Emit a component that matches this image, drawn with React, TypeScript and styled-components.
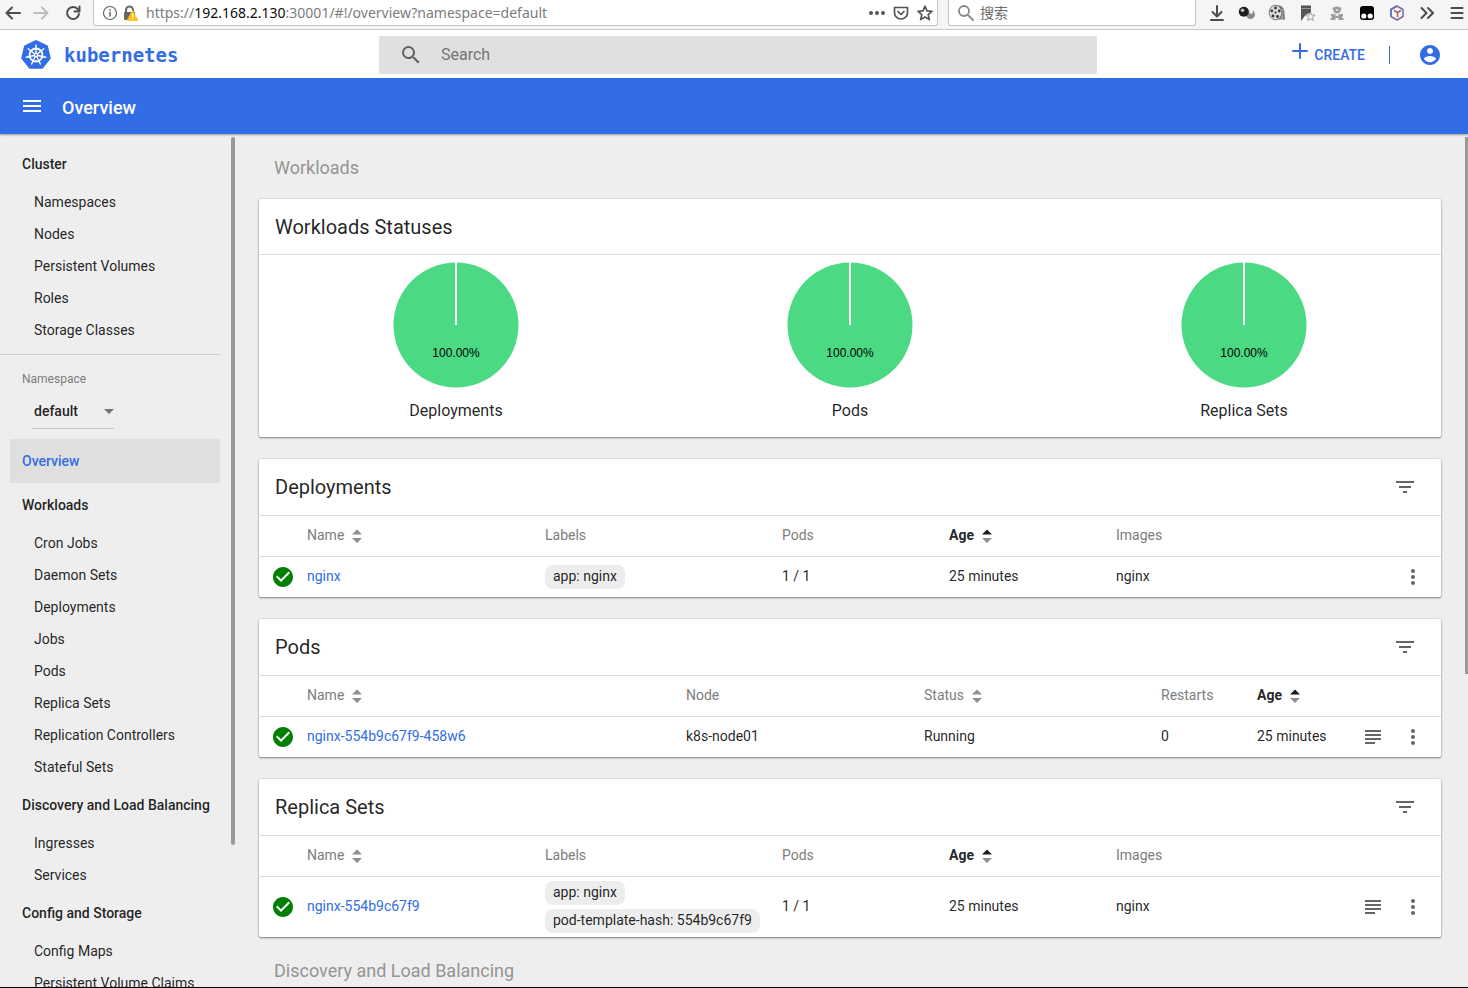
import React from "react";
import styled, { createGlobalStyle, css } from "styled-components";

const BLUE = "#326de6";
const TEXT = "rgba(0, 0, 0, 0.87)";
const MUTED = "#7d7d7d";

const GlobalStyle = createGlobalStyle`
  *, *::before, *::after { box-sizing: border-box; }
  html, body { margin: 0; height: 100%; }
  #root { height: 100%; }
  body { font-family: Roboto, "Liberation Sans", sans-serif; font-size: 14px; line-height: 20px; color: ${TEXT}; background: #eee; overflow: hidden; }
  button, input, select { font: inherit; color: inherit; }
  button { border: 0; padding: 0; background: none; cursor: pointer; }
  svg { display: block; flex: none; }
`;

const Page = styled.div`
  display: flex;
  flex-direction: column;
  height: 100vh;
  border-bottom: 1px solid #000;
`;

/* ---------- browser toolbar ---------- */

const Chrome = styled.div`
  flex: none;
  display: flex;
  align-items: flex-start;
  height: 30px;
  padding-left: 1px;
  background: #f5f5f5;
  border-bottom: 1px solid #c8c8c8;
  font-family: "Noto Sans", "Noto Sans CJK SC", sans-serif;
`;

const ChromeButton = styled.button<{ $w?: number }>`
  flex: none;
  display: flex;
  align-items: center;
  justify-content: center;
  width: ${(p) => p.$w ?? 30}px;
  height: 26px;
`;

const MenuButton = styled(ChromeButton)`
  width: 26px;
  padding-left: 4px;
`;

const Field = styled.div`
  display: flex;
  align-items: center;
  height: 26px;
  background: #fff;
  border: 1px solid #c4c4c4;
  border-top: 0;
  border-radius: 0 0 3px 3px;
`;

const UrlField = styled(Field)`
  flex: 1;
  margin-left: 5px;
  padding-left: 8px;
`;

const Url = styled.div`
  flex: 1;
  margin-left: 4px;
  color: #7c7c7c;
  white-space: nowrap;
  overflow: hidden;
  b { font-weight: 400; color: #0c0c0d; }
`;

const WebSearch = styled(Field)`
  width: 248px;
  margin: 0 6px 0 10px;
  padding-left: 9px;
  input {
    flex: 1;
    min-width: 0;
    margin-left: 6px;
    padding: 0;
    border: 0;
    outline: 0;
    background: none;
  }
  input::placeholder { color: #6c6c6c; opacity: 1; }
`;

/* ---------- application header ---------- */

const Header = styled.header`
  flex: none;
  display: grid;
  grid-template-columns: 379px 1fr 371px;
  align-items: center;
  height: 48px;
  padding-top: 1px;
  background: #fff;
`;

const Brand = styled.a`
  display: flex;
  align-items: center;
  gap: 12px;
  padding-left: 20px;
  color: ${BLUE};
  text-decoration: none;
  font: 700 19px/24px "DejaVu Sans Mono", monospace;
`;

const SearchBox = styled.label`
  display: flex;
  align-items: center;
  gap: 18px;
  height: 38px;
  padding-left: 20px;
  background: #e0e0e0;
  border-radius: 2px;
  input {
    flex: 1;
    min-width: 0;
    padding: 0;
    border: 0;
    outline: 0;
    background: none;
    font-size: 16px;
  }
  input::placeholder { color: #757575; opacity: 1; }
`;

const HeaderActions = styled.div`
  display: flex;
  align-items: center;
  justify-content: flex-end;
  padding-right: 26px;
  color: ${BLUE};
`;

const CreateButton = styled.button`
  display: flex;
  align-items: center;
  gap: 6px;
  padding-right: 24px;
  font-weight: 500;
  svg { margin-bottom: 8px; }
`;

const AccountButton = styled.button`
  padding-left: 28px;
  border-left: 1px solid ${BLUE};
  height: 18px;
  display: flex;
  align-items: center;
`;

const TitleBar = styled.div`
  flex: none;
  display: flex;
  align-items: center;
  gap: 18px;
  height: 56px;
  padding: 0 20px;
  background: ${BLUE};
  color: #fff;
  box-shadow: 0 1px 2px rgba(0, 0, 0, 0.35);
  z-index: 1;
  h1 { margin: 0; padding-top: 3px; font-size: 18px; line-height: 24px; font-weight: 500; }
`;

/* ---------- body and navigation ---------- */

const Body = styled.div`
  flex: 1;
  min-height: 0;
  display: flex;
  overflow: hidden;
`;

const Sidebar = styled.nav`
  flex: none;
  width: 220px;
  padding-top: 8px;
  overflow: hidden;
  white-space: nowrap;
`;

const Thumb = styled.div<{ $length: string; $w: number }>`
  flex: none;
  width: ${(p) => p.$w}px;
  height: ${(p) => p.$length};
  margin-top: 3px;
  background: #999;
`;

const SideThumb = styled(Thumb)`
  margin-left: 11px;
  border-radius: 2px;
`;

const navLink = css`
  display: flex;
  align-items: center;
  color: inherit;
  text-decoration: none;
`;

const GroupLink = styled.a<{ $active?: boolean }>`
  ${navLink}
  height: 44px;
  margin-left: 10px;
  padding-left: 12px;
  font-weight: 500;
  ${(p) => p.$active && css`background: #dfdfdf; color: ${BLUE};`}
`;

const ItemLink = styled.a`
  ${navLink}
  height: 32px;
  padding-left: 34px;
`;

const NamespaceBox = styled.div`
  margin-top: 8px;
  padding: 14px 0 10px 22px;
  border-top: 1px solid #cdcdcd;
  label { display: block; font-size: 12px; color: ${MUTED}; }
`;

const SelectWrap = styled.div`
  display: flex;
  align-items: center;
  width: 82px;
  height: 35px;
  margin: 5px 0 0 10px;
  border-bottom: 1px solid #c8c8c8;
  select {
    appearance: none;
    flex: 1;
    min-width: 0;
    padding: 0 0 0 2px;
    border: 0;
    background: none;
    font-weight: 500;
  }
`;

/* ---------- content ---------- */

const Main = styled.main`
  flex: 1;
  min-width: 0;
  padding: 0 24px;
  overflow: hidden;
`;

const SectionTitle = styled.h2`
  margin: 0;
  padding: 22px 15px 19px;
  font-size: 18px;
  line-height: 24px;
  font-weight: 400;
  color: #949494;
`;

const Card = styled.section`
  background: #fff;
  border-radius: 2px;
  box-shadow: 0 1px 2px rgba(0, 0, 0, 0.45), 0 0 2px rgba(0, 0, 0, 0.2);
  & + & { margin-top: 22px; }
`;

const CardHeader = styled.div<{ $h?: number }>`
  display: flex;
  align-items: center;
  justify-content: space-between;
  height: ${(p) => p.$h ?? 56}px;
  padding: 0 24px 0 16px;
  color: #666;
  h3 { margin: 0; font-size: 20px; line-height: 24px; font-weight: 400; color: ${TEXT}; }
`;

const Pies = styled.div`
  display: grid;
  grid-template-columns: repeat(3, 1fr);
  border-top: 1px solid #dedede;
  padding: 6px 0 16px;
`;

const PieFigure = styled.figure`
  display: flex;
  flex-direction: column;
  align-items: center;
  gap: 12px;
  margin: 0;
  font-size: 16px;
  text { font: 12px "Liberation Sans", sans-serif; text-anchor: middle; }
`;

const Table = styled.table`
  display: block;
`;

const RowGroup = styled.tbody`
  display: block;
`;

const Row = styled.tr<{ $cols: string }>`
  display: grid;
  grid-template-columns: 48px ${(p) => p.$cols} 40px 40px;
  align-items: center;
  min-height: 41px;
  padding-right: 8px;
  border-top: 1px solid #dadada;
`;

const HeadCell = styled.th<{ $active?: boolean }>`
  padding: 0 0 2px;
  text-align: left;
  font-weight: ${(p) => (p.$active ? 700 : 400)};
  color: ${(p) => (p.$active ? TEXT : MUTED)};
  button { display: flex; align-items: center; gap: 7px; font-weight: inherit; }
  svg { margin-top: 2px; }
`;

const Cell = styled.td<{ $icon?: boolean }>`
  padding: 0 0 2px;
  white-space: nowrap;
  ${(p) => p.$icon && css`display: flex; justify-content: center; padding: 0; color: #666;`}
`;

const NameLink = styled.a`
  color: ${BLUE};
  text-decoration: none;
`;

const Chips = styled.div`
  display: flex;
  flex-direction: column;
  align-items: flex-start;
  gap: 4px;
  padding: 4px 0 2px;
`;

const Chip = styled.span`
  padding: 1px 8px 3px;
  border-radius: 8px;
  background: #ededed;
`;

/* ---------- icons ---------- */

const Svg = ({ size = 24, d, color = "currentColor" }: { size?: number; d: string; color?: string }) => (
  <svg width={size} height={size} viewBox="0 0 24 24" fill={color} aria-hidden="true"><path d={d} /></svg>
);

const Line = ({ d, w = 2, color = "#4c4c4c", size = 16 }: { d: string; w?: number; color?: string; size?: number }) => (
  <svg width={size} height={size} viewBox="0 0 16 16" fill="none" stroke={color} strokeWidth={w} strokeLinecap="round" strokeLinejoin="round" aria-hidden="true"><path d={d} /></svg>
);

const MENU = "M3 18h18v-2H3v2zm0-5h18v-2H3v2zm0-7v2h18V6H3z";
const FILTER = "M10 18h4v-2h-4v2zM3 6v2h18V6H3zm3 7h12v-2H6v2z";
const MORE = "M12 8c1.100 0 2-.9 2-2s-.9-2-2-2-2 .9-2 2 .9 2 2 2zm0 2c-1.100 0-2 .9-2 2s.9 2 2 2 2-.9 2-2-.9-2-2-2zm0 6c-1.100 0-2 .9-2 2s.9 2 2 2 2-.9 2-2-.9-2-2-2z";
const SUBJECT = "M4 5h16v2H4zM4 9h16v2H4zM4 13h16v2H4zM4 17h10v2H4z";
const SEARCH = "M15.500 14h-.79l-.28-.27A6.471 6.471 0 0 0 16 9.500 6.500 6.500 0 1 0 9.500 16c1.610 0 3.090-.59 4.230-1.570l.27.28v.79l5 4.990L20.490 19l-4.990-5zm-6 0C7.010 14 5 11.990 5 9.500S7.010 5 9.500 5 14 7.010 14 9.500 11.990 14 9.500 14z";
const ACCOUNT = "M12 2C6.480 2 2 6.480 2 12s4.480 10 10 10 10-4.480 10-10S17.520 2 12 2zm0 3c1.660 0 3 1.340 3 3s-1.340 3-3 3-3-1.340-3-3 1.340-3 3-3zm0 14.200c-2.500 0-4.710-1.280-6-3.220.03-1.990 4-3.080 6-3.080 1.990 0 5.970 1.090 6 3.080-1.290 1.940-3.500 3.220-6 3.220z";
const CHECK = "M12 2C6.480 2 2 6.480 2 12s4.480 10 10 10 10-4.480 10-10S17.520 2 12 2zm-2 15l-5-5 1.410-1.410L10 14.170l7.590-7.590L19 8l-9 9z";

const SortIcon = ({ active }: { active?: boolean }) => (
  <svg width="12" height="14" viewBox="0 0 12 14" aria-hidden="true">
    <path d="M1 5.500 6 .5l5 5z" fill={active ? "#1c1c1c" : "#8f8f8f"} />
    <path d="M1 9l5 5 5-5z" fill="#8f8f8f" />
  </svg>
);

const Wheel = () => (
  <svg width="32" height="32" viewBox="0 0 32 32" aria-hidden="true">
    <path d="M16 2.500 26.500 7.500 29.200 19 21.800 28.300H10.200L2.800 19 5.500 7.500z" fill={BLUE} stroke={BLUE} strokeWidth="3" strokeLinejoin="round" />
    <g fill="none" stroke="#fff" strokeLinecap="round">
      <circle cx="16" cy="16" r="6.500" strokeWidth="1.800" />
      {Array.from({ length: 7 }, (_, i) => (
        <path key={i} d="M16 14V6" strokeWidth="1.400" transform={`rotate(${(i * 360) / 7} 16 16)`} />
      ))}
    </g>
    <circle cx="16" cy="16" r="2.200" fill="#fff" />
    <circle cx="16" cy="16" r="0.900" fill={BLUE} />
  </svg>
);

const InfoIcon = () => (
  <svg width="16" height="16" viewBox="0 0 16 16" aria-hidden="true">
    <circle cx="8" cy="8" r="6.500" fill="none" stroke="#666" strokeWidth="1.200" />
    <path d="M7.200 7h1.600v4.500H7.200zM7.200 4.300h1.600v1.500H7.200z" fill="#666" />
  </svg>
);

const LockIcon = () => (
  <svg width="16" height="16" viewBox="0 0 16 16" aria-hidden="true">
    <path d="M4 8V5a3.500 3.500 0 0 1 7 0v3" fill="none" stroke="#666" strokeWidth="2" />
    <rect x="2" y="7" width="11" height="8" rx="1" fill="#666" />
    <path d="M10.500 5.500 16 15.500H5z" fill="#ffc21a" stroke="#ffc21a" strokeWidth=".8" strokeLinejoin="round" />
    <path d="M10 8.500h1.200V12H10zM10 13h1.200v1.200H10z" fill="#fff" />
  </svg>
);

const Balls = () => (
  <svg width="18" height="16" viewBox="0 0 18 16" aria-hidden="true">
    <circle cx="12.500" cy="9.500" r="4.500" fill="#8a8a8a" /><circle cx="13" cy="6.800" r="2" fill="#f2f2f2" />
    <circle cx="5.800" cy="6.800" r="5" fill="#1d1d1d" /><circle cx="4.500" cy="5.200" r="1.800" fill="#bbb" />
  </svg>
);

const Reel = () => (
  <svg width="18" height="18" viewBox="0 0 18 18" aria-hidden="true">
    <path d="M8 1.500h4c3 1 4.500 4 4.500 8l.5 6H9z" fill="#777" />
    <path d="M14 5v10" stroke="#ccc" />
    <ellipse cx="7.500" cy="8.500" rx="6.300" ry="7.300" fill="#ddd" stroke="#777" />
    <g fill="#333"><circle cx="7.500" cy="8.500" r="1.100" /><circle cx="7.500" cy="4" r="1.400" /><circle cx="3.800" cy="6.800" r="1.400" /><circle cx="5" cy="12" r="1.400" /><circle cx="9.500" cy="12.500" r="1.400" /><circle cx="11.200" cy="7" r="1.400" /></g>
  </svg>
);

const Flag = () => (
  <svg width="18" height="18" viewBox="0 0 18 18" aria-hidden="true">
    <path d="M3 1.500h10v7l-5 2-5 6.500z" fill="#555" />
    <path d="M3 4.500h10" stroke="#999" />
    <path d="m12.500 8 1.200 2.900 3.200.3-2.400 2.100.7 3.200-2.700-1.700-2.800 1.700.7-3.200L8 11.200l3.200-.3z" fill="#eee" stroke="#8a8a8a" strokeWidth=".8" />
  </svg>
);

const Robot = () => (
  <svg width="16" height="16" viewBox="0 0 16 16" aria-hidden="true">
    <g fill="#9c9c9c">
      <circle cx="8" cy="5" r="3.600" /><circle cx="4.800" cy="3.500" r="1.300" /><circle cx="11.200" cy="3.500" r="1.300" />
      <path d="M2 9h4.500v2.500L8 10.500l1.500 1V9H14v2.500h-1V13h1.500v2h-5v-2h-3v2h-5v-2H3v-1.500H2z" />
    </g>
    <circle cx="8" cy="5" r="1.300" fill="#d8d8d8" />
  </svg>
);

const Monkey = () => (
  <svg width="16" height="16" viewBox="0 0 16 16" aria-hidden="true">
    <rect x="1" y="1" width="14" height="14" rx="3" fill="#000" />
    <circle cx="4.800" cy="11" r="2.600" fill="#fff" /><circle cx="11.200" cy="11" r="2.600" fill="#fff" />
  </svg>
);

const Cube = () => (
  <svg width="16" height="16" viewBox="0 0 16 16" fill="none" strokeWidth="1.500" strokeLinejoin="round" aria-hidden="true">
    <path d="m8 1 6 3.500v7L8 15l-6-3.500v-7z" stroke="#7d68a8" />
    <path d="M5 5.500 8.500 7.500 12 5.500M8.500 7.500v4.500" stroke="#a8606e" />
    <path d="M2 11.500v-7L8 1" stroke="#5b6fb5" />
  </svg>
);

/* ---------- data ---------- */

const cluster = ["Namespaces", "Nodes", "Persistent Volumes", "Roles", "Storage Classes"];
const groups: [string, string[]][] = [
  ["Workloads", ["Cron Jobs", "Daemon Sets", "Deployments", "Jobs", "Pods", "Replica Sets", "Replication Controllers", "Stateful Sets"]],
  ["Discovery and Load Balancing", ["Ingresses", "Services"]],
  ["Config and Storage", ["Config Maps", "Persistent Volume Claims"]],
];

type Column = { title: string; sort?: "idle" | "active" };
type Resource = { title: string; cols: string; columns: Column[]; cells: (string | string[])[]; logs?: boolean };

const workloadCols = "238fr 237fr 167fr 167fr 237fr";
const podCols = "379fr 238fr 237fr 96fr 96fr";

const workloadColumns: Column[] = [
  { title: "Name", sort: "idle" }, { title: "Labels" }, { title: "Pods" }, { title: "Age", sort: "active" }, { title: "Images" },
];

const resources: Resource[] = [
  {
    title: "Deployments", cols: workloadCols, columns: workloadColumns,
    cells: ["nginx", ["app: nginx"], "1 / 1", "25 minutes", "nginx"],
  },
  {
    title: "Pods", cols: podCols, logs: true,
    columns: [{ title: "Name", sort: "idle" }, { title: "Node" }, { title: "Status", sort: "idle" }, { title: "Restarts" }, { title: "Age", sort: "active" }],
    cells: ["nginx-554b9c67f9-458w6", "k8s-node01", "Running", "0", "25 minutes"],
  },
  {
    title: "Replica Sets", cols: workloadCols, columns: workloadColumns, logs: true,
    cells: ["nginx-554b9c67f9", ["app: nginx", "pod-template-hash: 554b9c67f9"], "1 / 1", "25 minutes", "nginx"],
  },
];

/* ---------- views ---------- */

const Pie = ({ name }: { name: string }) => (
  <PieFigure>
    <svg width="128" height="128" viewBox="0 0 128 128">
      <circle cx="64" cy="64" r="62.500" fill="#4cd984" />
      <path d="M64 0v64" stroke="#fff" strokeWidth="2" />
      <text x="64" y="96">100.00%</text>
    </svg>
    <figcaption>{name}</figcaption>
  </PieFigure>
);

const ResourceCard = ({ title, cols, columns, cells, logs }: Resource) => (
  <Card>
    <CardHeader>
      <h3>{title}</h3>
      <button aria-label={`Filter ${title}`}><Svg d={FILTER} /></button>
    </CardHeader>
    <Table>
      <RowGroup as="thead">
        <Row $cols={cols}>
          <HeadCell />
          {columns.map((c) => (
            <HeadCell key={c.title} $active={c.sort === "active"}>
              {c.sort ? <button>{c.title}<SortIcon active={c.sort === "active"} /></button> : c.title}
            </HeadCell>
          ))}
        </Row>
      </RowGroup>
      <RowGroup>
        <Row $cols={cols}>
          <Cell $icon><Svg d={CHECK} color="#008000" /></Cell>
          {cells.map((cell, i) => (
            <Cell key={i}>
              {Array.isArray(cell)
                ? <Chips>{cell.map((l) => <Chip key={l}>{l}</Chip>)}</Chips>
                : i === 0 ? <NameLink href="#">{cell}</NameLink> : cell}
            </Cell>
          ))}
          <Cell $icon>{logs && <button aria-label="Logs"><Svg d={SUBJECT} /></button>}</Cell>
          <Cell $icon><button aria-label="Actions"><Svg d={MORE} /></button></Cell>
        </Row>
      </RowGroup>
    </Table>
  </Card>
);

export default function App() {
  return (
    <Page>
      <GlobalStyle />
      <Chrome>
        <ChromeButton aria-label="Back" $w={24}><Line d="M15 8H1.500M7 2.500 1.500 8 7 13.500" /></ChromeButton>
        <ChromeButton aria-label="Forward" $w={32}><Line color="#bdbdbd" d="M1 8h13.500M9 2.500 14.500 8 9 13.500" /></ChromeButton>
        <ChromeButton aria-label="Reload" $w={31}><Line d="M13 4.500A6 6 0 1 0 14 9M14.500 1.500v5h-5" /></ChromeButton>
        <UrlField>
          <InfoIcon />
          <ChromeButton as="span" $w={24}><LockIcon /></ChromeButton>
          <Url role="textbox" aria-label="Address">https://<b>192.168.2.130</b>:30001/#!/overview?namespace=default</Url>
          <ChromeButton aria-label="Page actions" $w={24}>
            <svg width="16" height="16" viewBox="0 0 16 16" fill="#555"><circle cx="2" cy="8" r="2" /><circle cx="8" cy="8" r="2" /><circle cx="14" cy="8" r="2" /></svg>
          </ChromeButton>
          <ChromeButton aria-label="Save" $w={24}><Line w={1.7} color="#555" d="M1.500 2.500h13V8a6.500 6 0 0 1-13 0zM5 6.500l3 3 3-3" /></ChromeButton>
          <ChromeButton aria-label="Bookmark" $w={24}><Line w={1.7} color="#555" d="m8 1.200 2 4.600 5 .5-3.800 3.300 1.200 5L8 12l-4.400 2.600 1.200-5L1 6.300l5-.5z" /></ChromeButton>
        </UrlField>
        <WebSearch>
          <Line w={1.8} color="#888" d="M6 11A5 5 0 1 0 6 1a5 5 0 0 0 0 10zM9.800 9.800 15 15" />
          <input aria-label="搜索" placeholder="搜索" />
        </WebSearch>
        <ChromeButton aria-label="Downloads"><Line d="M8 1v10M3.500 7 8 11.500 12.500 7M2 15h12" /></ChromeButton>
        <ChromeButton aria-label="Proxy"><Balls /></ChromeButton>
        <ChromeButton aria-label="Video"><Reel /></ChromeButton>
        <ChromeButton aria-label="Bookmarks"><Flag /></ChromeButton>
        <ChromeButton aria-label="Robot"><Robot /></ChromeButton>
        <ChromeButton aria-label="Scripts"><Monkey /></ChromeButton>
        <ChromeButton aria-label="Cube"><Cube /></ChromeButton>
        <ChromeButton aria-label="More tools"><Line d="m2.500 3 5 5-5 5M9 3l5 5-5 5" /></ChromeButton>
        <MenuButton aria-label="Menu"><Line d="M2.500 3h11M2.500 8h11M2.500 13h11" /></MenuButton>
      </Chrome>

      <Header>
        <Brand href="#"><Wheel />kubernetes</Brand>
        <SearchBox>
          <Svg d={SEARCH} color="#616161" />
          <input aria-label="Search" placeholder="Search" />
        </SearchBox>
        <HeaderActions>
          <CreateButton><Line w={2} color={BLUE} d="M8 1v14M1 8h14" />CREATE</CreateButton>
          <AccountButton aria-label="Account"><Svg d={ACCOUNT} /></AccountButton>
        </HeaderActions>
      </Header>

      <TitleBar>
        <button aria-label="Toggle navigation"><Svg d={MENU} /></button>
        <h1>Overview</h1>
      </TitleBar>

      <Body>
        <Sidebar>
          <GroupLink href="#">Cluster</GroupLink>
          {cluster.map((n) => <ItemLink href="#" key={n}>{n}</ItemLink>)}
          <NamespaceBox>
            <label htmlFor="namespace">Namespace</label>
            <SelectWrap>
              <select id="namespace" defaultValue="default"><option>default</option></select>
              <svg width="10" height="5" viewBox="0 0 10 5" fill="#757575" aria-hidden="true"><path d="M0 0h10L5 5z" /></svg>
            </SelectWrap>
          </NamespaceBox>
          <GroupLink href="#" $active>Overview</GroupLink>
          {groups.map(([name, items]) => (
            <React.Fragment key={name}>
              <GroupLink href="#">{name}</GroupLink>
              {items.map((n) => <ItemLink href="#" key={n}>{n}</ItemLink>)}
            </React.Fragment>
          ))}
        </Sidebar>
        <SideThumb $w={4} $length="83%" />
        <Main>
          <SectionTitle>Workloads</SectionTitle>
          <Card>
            <CardHeader $h={55}><h3>Workloads Statuses</h3></CardHeader>
            <Pies>
              <Pie name="Deployments" />
              <Pie name="Pods" />
              <Pie name="Replica Sets" />
            </Pies>
          </Card>
          {resources.map((r) => <ResourceCard key={r.title} {...r} />)}
          <SectionTitle>Discovery and Load Balancing</SectionTitle>
        </Main>
        <Thumb $w={3} $length="63%" />
      </Body>
    </Page>
  );
}
